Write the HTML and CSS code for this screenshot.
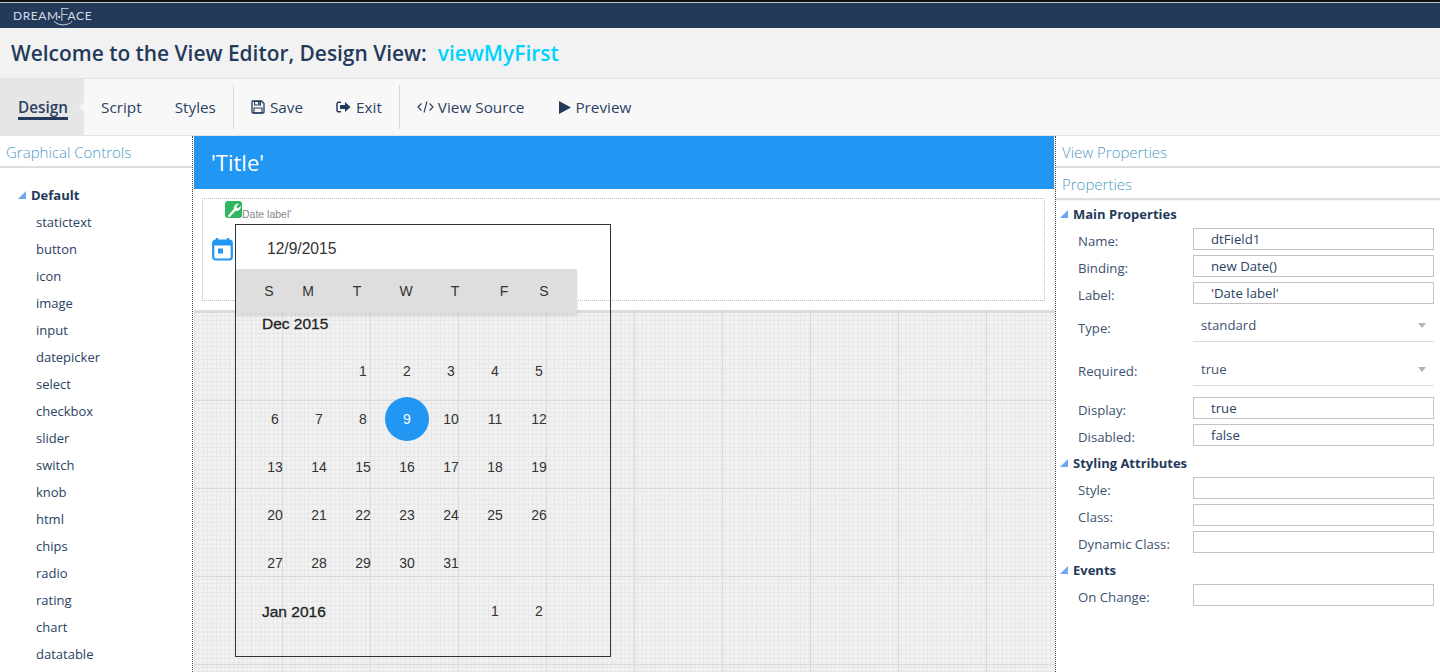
FILE: index.html
```html
<!DOCTYPE html>
<html lang="en">
<head>
<meta charset="utf-8">
<title>View Editor</title>
<link rel="stylesheet" href="styles.css">
</head>
<body>
<div class="app">
  <header class="brand">
    <div class="logo">
      <span>DREAM</span><span class="logo-dot">·</span><span class="logo-f">F</span><span>ACE</span>
      <svg class="logo-swoosh" width="20" height="6" viewBox="0 0 20 6"><path d="M1 1C4 4.500 9 5.500 13 4.500S18 3 19 1" fill="none" stroke="#d5dbe3" stroke-width="1"/></svg>
    </div>
  </header>
  <div class="titlebar">
    <h1 class="title">Welcome to the View Editor, Design View:</h1>
    <span class="view-name">viewMyFirst</span>
  </div>
  <nav class="toolbar">
    <a class="tab tab-active"><span class="tab-label">Design</span></a>
    <a class="tab tab-script">Script</a>
    <a class="tab tab-styles">Styles</a>
    <span class="divider"></span>
    <a class="tool tool-save">
      <svg width="14" height="14" viewBox="0 0 14 14"><path d="M1.500 1h9L13 3.500V12a1 1 0 0 1-1 1H2a1 1 0 0 1-1-1V1.500z" fill="none" stroke="#243a5a" stroke-width="1.300"/><path d="M3.500 1.500h6v3.500h-6zM3 8h8v5H3z" fill="none" stroke="#243a5a" stroke-width="1.100"/><rect x="7" y="2" width="1.500" height="2.500" fill="#243a5a"/></svg>
      Save
    </a>
    <a class="tool tool-exit">
      <svg width="15" height="12" viewBox="0 0 15 12"><path d="M5 1.200H2.800A1.800 1.800 0 0 0 1 3v6a1.800 1.800 0 0 0 1.800 1.800H5" fill="none" stroke="#243a5a" stroke-width="1.500"/><path d="M4 4h5V1l5.500 5L9 11V8H4z" fill="#243a5a"/></svg>
      Exit
    </a>
    <span class="divider"></span>
    <a class="tool tool-source">
      <svg width="17" height="12" viewBox="0 0 17 12"><path d="M4.500 2.500L1 6l3.500 3.500M12.500 2.500L16 6l-3.500 3.500M10 .5L7 11.500" fill="none" stroke="#243a5a" stroke-width="1.100"/></svg>
      View Source
    </a>
    <a class="tool tool-preview">
      <svg width="12" height="13" viewBox="0 0 12 13"><path d="M0 0l12 6.500L0 13z" fill="#243a5a"/></svg>
      Preview
    </a>
  </nav>
  <main class="workspace">
    <aside class="controls">
      <h2 class="panel-title">Graphical Controls</h2>
      <div class="tree-head"><span class="tri"></span>Default</div>
      <ul class="tree">
        <li>statictext</li><li>button</li><li>icon</li><li>image</li><li>input</li><li>datepicker</li><li>select</li><li>checkbox</li><li>slider</li><li>switch</li><li>knob</li><li>html</li><li>chips</li><li>radio</li><li>rating</li><li>chart</li><li>datatable</li>
      </ul>
    </aside>
    <section class="canvas">
      <div class="view-title">'Title'</div>
      <div class="form-band">
        <div class="form-box">
          <div class="field-label">
            <span class="badge">
              <svg width="17" height="17" viewBox="0 0 17 17"><path d="M3 15L9.300 7.800C8.600 5.500 10.300 2.700 13.500 3L11.200 5.300 11.700 7 13.400 7.500 15.500 5.300C15.800 8.500 13 10.300 10.600 9.500L4.500 16z" fill="#fff" stroke="#fff" stroke-width=".6"/></svg>
            </span>
            <span class="label-text">Date label'</span>
          </div>
          <svg class="cal-icon" width="21" height="24" viewBox="0 0 21 24"><path d="M5 1v4M16 1v4" stroke="#2196f3" stroke-width="2.400"/><rect x="1.200" y="3.500" width="18.600" height="19" rx="2.500" fill="none" stroke="#2196f3" stroke-width="2.200"/><rect x="1.200" y="3.500" width="18.600" height="5" fill="#2196f3"/><rect x="6" y="11.500" width="5" height="5" fill="#2196f3"/></svg>
        </div>
      </div>
      <div class="grid-area"></div>
      <div class="calendar">
        <div class="cal-value">12/9/2015</div>
        <div class="cal-week">
          <span>S</span><span class="wd-m">M</span><span>T</span><span>W</span><span>T</span><span>F</span><span class="wd-s">S</span>
        </div>
        <div class="cal-month">Dec 2015</div>
        <div class="cal-days">
          <span class="d-start">1</span><span>2</span><span>3</span><span>4</span><span>5</span>
          <span>6</span><span>7</span><span>8</span><span class="d-today">9</span><span>10</span><span>11</span><span>12</span>
          <span>13</span><span>14</span><span>15</span><span>16</span><span>17</span><span>18</span><span>19</span>
          <span>20</span><span>21</span><span>22</span><span>23</span><span>24</span><span>25</span><span>26</span>
          <span>27</span><span>28</span><span>29</span><span>30</span><span>31</span><span></span><span></span>
          <span class="d-next">Jan 2016</span><span>1</span><span>2</span>
        </div>
      </div>
    </section>
    <aside class="props">
      <h2 class="panel-title panel-view">View Properties</h2>
      <h2 class="panel-title panel-props">Properties</h2>
      <h3 class="sec sec-main"><span class="tri"></span>Main Properties</h3>
      <div class="row"><label>Name:</label><span class="inp">dtField1</span></div>
      <div class="row"><label>Binding:</label><span class="inp">new Date()</span></div>
      <div class="row"><label>Label:</label><span class="inp">'Date label'</span></div>
      <div class="row row-type"><label>Type:</label><span class="sel">standard<i class="caret"></i></span></div>
      <div class="row row-req"><label>Required:</label><span class="sel">true<i class="caret"></i></span></div>
      <div class="row"><label>Display:</label><span class="inp">true</span></div>
      <div class="row"><label>Disabled:</label><span class="inp">false</span></div>
      <h3 class="sec"><span class="tri"></span>Styling Attributes</h3>
      <div class="row"><label>Style:</label><span class="inp"></span></div>
      <div class="row"><label>Class:</label><span class="inp"></span></div>
      <div class="row"><label>Dynamic Class:</label><span class="inp"></span></div>
      <h3 class="sec"><span class="tri"></span>Events</h3>
      <div class="row"><label>On Change:</label><span class="inp"></span></div>
    </aside>
  </main>
</div>
</body>
</html>
```
FILE: styles.css
```css
* { box-sizing: border-box; }
html, body { margin: 0; height: 100%; overflow: hidden; }
body { font-family: "Open Sans", sans-serif; color: #2b4263; background: #fff; }
.app { height: 672px; display: flex; flex-direction: column; overflow: hidden; }

.brand { height: 28px; flex: none; background: #243a5a; border-top: 2px solid #111; box-shadow: inset 0 1px 0 #c8c8c8; padding: 4px 0 0 13px; }
.logo { position: relative; display: flex; align-items: center; height: 18px; font-family: Lato, sans-serif; font-size: 12px; letter-spacing: .55px; color: #d5dbe3; font-weight: 400; }
.logo-dot { margin: 0 -1px; font-weight: 700; }
.logo-f { font-size: 17px; font-weight: 300; line-height: 16px; margin: 0 -2px 0 -1px; }
.logo-swoosh { position: absolute; left: 40px; top: 14px; }

.titlebar { height: 50px; flex: none; background: #f2f2f2; display: flex; align-items: center; padding: 0 0 0 11px; gap: 11px; }
.title { margin: 0; font-size: 20.900px; font-weight: 600; color: #243a5a; }
.view-name { font-size: 20.900px; font-weight: 600; color: #00d2ff; }

.toolbar { height: 58px; flex: none; background: #f8f8f8; border-top: 1px solid #e4e4e4; border-bottom: 1px solid #e4e4e4; display: flex; align-items: center; font-size: 15.300px; color: #2b4263; }
.tab-active { position: relative; align-self: stretch; width: 84px; padding-left: 18px; background: #e6e6e6; display: flex; align-items: center; color: #2b4263; }
.tab-active::after { content: ""; position: absolute; right: -1px; top: 23px; border: 5px solid transparent; border-right: 6px solid #f8f8f8; border-left: 0; }
.tab-label { border-bottom: 3px solid #243a5a; line-height: 19px; padding-top: 3px; font-weight: 600; }
.tab-script { margin-left: 17px; }
.tab-styles { margin-left: 33px; }
.divider { width: 1px; height: 44px; background: #d6d6d6; }
.tab-styles + .divider { margin-left: 17px; }
.tool { display: flex; align-items: center; gap: 5px; }
.tool-save { margin-left: 17px; }
.tool-exit { margin-left: 33px; }
.tool-exit + .divider { margin-left: 17px; }
.tool-source { margin-left: 17px; gap: 4px; }
.tool-preview { margin-left: 35px; gap: 4px; }

.workspace { flex: 1; min-height: 0; display: flex; }
.panel-title { margin: 0; font-size: 15px; font-weight: 300; color: #4f9cc6; height: 32px; line-height: 33px; padding-left: 6px; border-bottom: 2px solid #dedede; }

.tri { display: inline-block; width: 0; height: 0; border-style: solid; border-width: 0 0 8px 8px; border-color: transparent transparent #6da6ee transparent; }

.controls { width: 193px; flex: none; margin-right: 1px; border-right: 1px dotted #444; background: #fff; }
.tree-head { display: flex; align-items: center; font-size: 13px; font-weight: 700; color: #243a5a; padding: 18px 0 0 18px; line-height: 18px; }
.tree-head .tri { margin-right: 5px; }
.tree { list-style: none; margin: 5px 0 0; padding: 0 0 0 36px; font-size: 13px; }
.tree li { height: 27px; line-height: 27px; }

.canvas { position: relative; width: 861px; flex: none; display: flex; flex-direction: column; background-color: #f1f1f1; }
.view-title { height: 53px; flex: none; margin-right: 1px; background: #2196f3; color: #fff; font-size: 22px; line-height: 53px; padding-left: 17px; }
.form-band { height: 122px; flex: none; margin-right: 1px; padding: 9px 9px 9px 8px; background: #fff; border-bottom: 1px solid #ddd; box-shadow: 0 1px 1px rgba(0,0,0,.06); position: relative; }
.form-box { height: 103px; border: 1px dotted #bbb; padding: 2px 0 0 9px; }
.field-label { display: flex; align-items: flex-start; padding-left: 13px; }
.badge { width: 17px; height: 17px; border-radius: 3px; background: #2fb65f; display: block; flex: none; }
.badge svg { display: block; }
.label-text { font-family: "Liberation Sans", sans-serif; font-size: 10.500px; color: #888; line-height: 12px; margin-top: 7px; }
.cal-icon { display: block; margin-top: 17px; }
.grid-area { flex: 1; min-height: 0;
  background-color: #f2f2f2;
  background-image:
    linear-gradient(to right, #dadada 1px, transparent 1px),
    linear-gradient(to bottom, #dadada 1px, transparent 1px),
    linear-gradient(to right, #e6e6e6 1px, transparent 1px),
    linear-gradient(to bottom, #e6e6e6 1px, transparent 1px);
  background-size: 88px 88px, 88px 88px, 4.400px 4.400px, 4.400px 4.400px;
  background-position: 0 -87px, 0 -87px, 0 0, 0 0;
}

.calendar { position: absolute; left: 41px; top: 88px; width: 376px; height: 433px; border: 1px solid #333; font-family: "Liberation Sans", sans-serif; color: #222; }
.cal-value { height: 44px; font-size: 15.600px; line-height: 48px; padding-left: 31px; color: #333; }
.cal-week { height: 44px; width: 341px; background: #dedede; box-shadow: 0 3px 3px rgba(0,0,0,.1); display: flex; padding-left: 8.500px; font-size: 14px; line-height: 44px; color: #333; }
.cal-week span { width: 49px; text-align: center; flex: none; }
.cal-week .wd-m { margin-left: -10px; }
.cal-week .wd-s { margin-left: -9px; }
.cal-month { height: 22px; margin-top: 0; padding-left: 26px; font-size: 15.500px; line-height: 22px; -webkit-text-stroke: .3px #222; }
.cal-days { margin: 12px 0 0 17px; display: grid; grid-template-columns: repeat(7, 44px); grid-auto-rows: 48px; font-size: 14px; }
.cal-days span { display: flex; align-items: center; justify-content: center; color: #333; }
.cal-days .d-start { grid-column-start: 3; }
.cal-days .d-today { background: #2196f3; color: #fff; width: 44px; height: 44px; border-radius: 50%; align-self: center; }
.cal-days .d-next { grid-column: 1 / span 5; justify-content: flex-start; padding: 1px 0 0 9px; font-size: 15.500px; color: #222; -webkit-text-stroke: .3px #222; }

.props { flex: 1; min-width: 0; border-left: 1px dotted #444; background: #fff; font-size: 13.200px; }
.panel-view { height: 32px; }
.panel-props { height: 32px; line-height: 32px; box-shadow: 0 1px 2px rgba(0,0,0,.06); }
.sec { display: flex; align-items: center; margin: 0; height: 26px; padding: 0 0 2px 4px; font-size: 13px; font-weight: 700; color: #243a5a; }
.sec .tri { margin-right: 5px; }
.sec-main { height: 28px; padding-bottom: 0; }
.row { display: flex; align-items: flex-start; height: 27px; padding: 0 6px 0 22px; }
.row label { width: 115px; flex: none; line-height: 27px; color: #3d5270; }
.inp { display: block; width: 241px; height: 22px; border: 1px solid #c2c2c2; line-height: 20px; padding-left: 17px; color: #2b4263; }
.sel { position: relative; display: block; width: 241px; border-bottom: 1px solid #dcdcdc; padding-left: 8px; color: #3d5270; }
.caret { position: absolute; right: 8px; width: 0; height: 0; border-left: 4px solid transparent; border-right: 4px solid transparent; border-top: 5px solid #b5b5b5; }
.row-type { height: 33px; }
.row-type label { padding-top: 6px; }
.row-type .sel { height: 33px; line-height: 33px; }
.row-type .caret { top: 14px; }
.row-req { height: 44px; margin-bottom: 11px; }
.row-req label { padding-top: 16px; }
.row-req .sel { height: 44px; line-height: 10px; padding-top: 22px; }
.row-req .caret { top: 25px; }
```
